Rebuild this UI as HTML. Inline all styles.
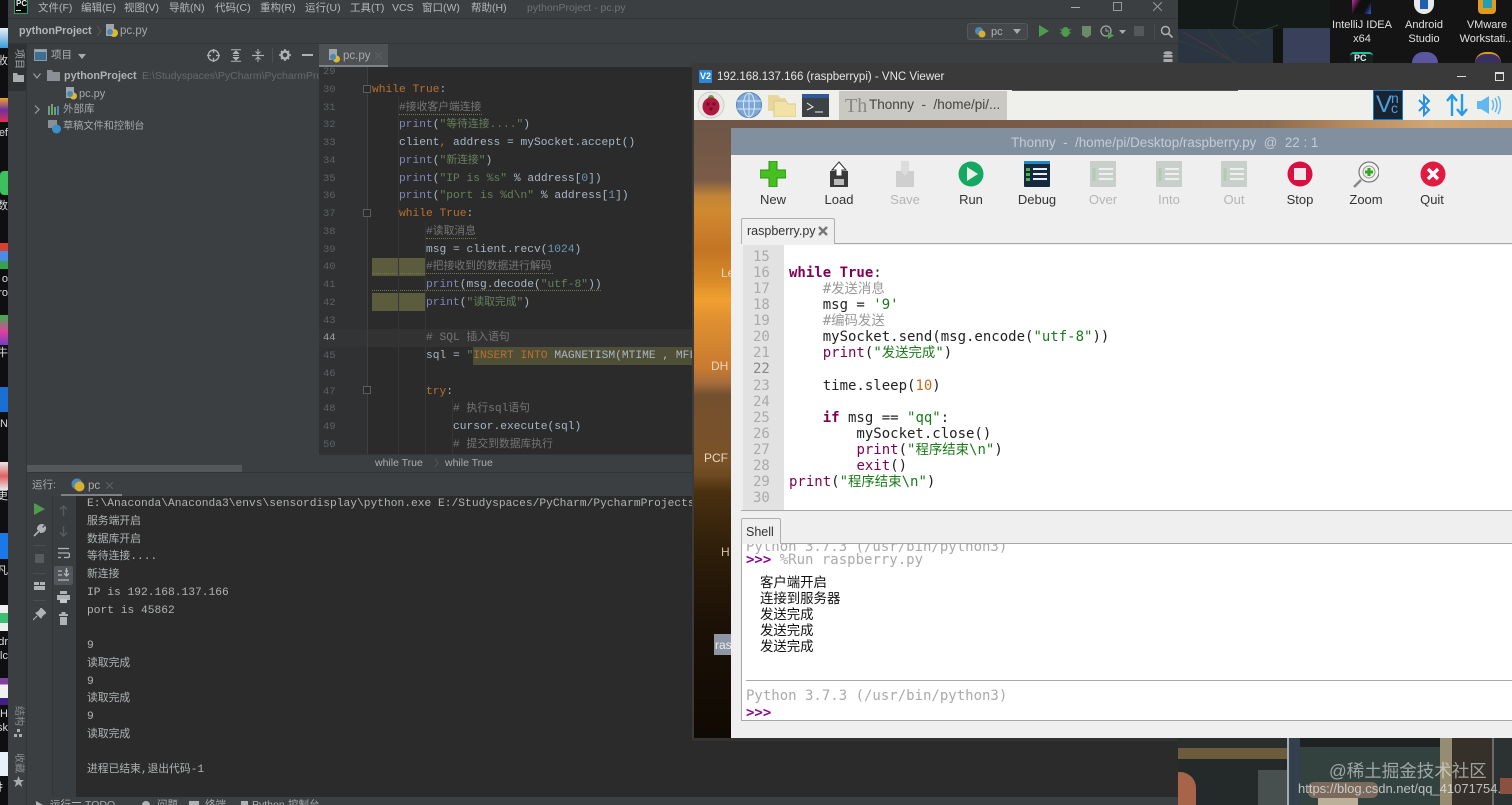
<!DOCTYPE html>
<html lang="zh"><head><meta charset="utf-8"><title>pc.py</title>
<style>
html,body{margin:0;padding:0;width:1512px;height:805px;overflow:hidden;background:#111}
*{box-sizing:border-box}
.a{position:absolute}
.t{position:absolute;white-space:pre;font-family:"Liberation Sans","Noto Sans CJK SC",sans-serif;line-height:16px}
svg{position:absolute;display:block}
.mono,.mono div{font-family:"Liberation Mono","Noto Sans CJK SC",monospace}
.ide{font-size:11.25px}
.ide div{height:17.75px;line-height:17.75px;white-space:pre}
.ide i{font-style:normal;font-size:10.8px}
.p{color:#8385b8}.k{color:#b9702e}.s{color:#66805a}.c{color:#757575}.d{color:#a9b7c6}
.th{font-family:"DejaVu Sans Mono","Noto Sans CJK SC",monospace;font-size:14px}
.th div{height:16.07px;line-height:16.07px;white-space:pre}
.th i{font-style:normal;font-size:13.4px}
.tk{color:#7f0055;font-weight:bold}.tp{color:#7f0055}.ts{color:#1a7a1a}.tc{color:#999}.tn{color:#c26a20}
.lbl{position:absolute;top:192px;width:66px;text-align:center;font:13px/16px "Liberation Sans",sans-serif;color:#333}
.dis{color:#b5b5b5}
.desk{position:absolute;text-align:center;color:#e0e0e0;font:11px/14px "Liberation Sans",sans-serif;white-space:nowrap}
.v{writing-mode:vertical-rl;text-orientation:sideways}
.w{position:absolute;height:1px;border-top:1px dotted #77774e}
</style></head><body>

<!-- left desktop strip -->
<div class="a" style="left:0;top:0;width:8px;height:805px;background:#0f0f12;overflow:hidden">
<div class="a" style="left:0;top:28px;width:8px;height:20px;background:linear-gradient(#e8f0f5,#3a9ad8)"></div>
<div class="a" style="left:0;top:98px;width:8px;height:24px;background:linear-gradient(#f0a030,#7030a0 50%,#e03050)"></div>
<div class="a" style="left:0;top:171px;width:8px;height:24px;background:#3fc060;border-radius:4px 0 0 4px"></div>
<div class="a" style="left:0;top:243px;width:8px;height:26px;background:linear-gradient(#d84030 30%,#4a8ae8 30%,#4a8ae8 70%,#3aa050 70%)"></div>
<div class="a" style="left:0;top:315px;width:8px;height:30px;background:linear-gradient(#3ab050,#e040a0 55%,#7040c0)"></div>
<div class="a" style="left:0;top:387px;width:8px;height:25px;background:#1a70d0"></div>
<div class="a" style="left:0;top:462px;width:8px;height:28px;background:linear-gradient(#e8e8e8,#e06060 50%,#e8e8f0)"></div>
<div class="a" style="left:0;top:533px;width:8px;height:26px;background:#1a78e8"></div>
<div class="a" style="left:0;top:605px;width:8px;height:26px;background:linear-gradient(#f0f0f0 30%,#3ac070 30%,#3ac070 70%,#f0f0f0 70%)"></div>
<div class="a" style="left:0;top:678px;width:8px;height:27px;background:linear-gradient(#8040a0 25%,#f0f0f0 25%,#f0f0f0 75%,#402080 75%)"></div>
<div class="a" style="left:0;top:752px;width:8px;height:24px;background:#e8f0fa"></div>
<div class="t" style="right:0;top:53px;color:#ddd;font-size:11px">收</div>
<div class="t" style="right:0;top:125px;color:#ddd;font-size:11px">ef</div>
<div class="t" style="right:0;top:198px;color:#ddd;font-size:11px">数</div>
<div class="t" style="right:0;top:271px;color:#ddd;font-size:11px">o</div>
<div class="t" style="right:0;top:285px;color:#ddd;font-size:11px">ro</div>
<div class="t" style="right:0;top:345px;color:#ddd;font-size:11px">牛</div>
<div class="t" style="right:0;top:416px;color:#ddd;font-size:11px">IN</div>
<div class="t" style="right:0;top:488px;color:#ddd;font-size:11px">更</div>
<div class="t" style="right:0;top:563px;color:#ddd;font-size:11px">凡</div>
<div class="t" style="right:0;top:634px;color:#ddd;font-size:11px">dr</div>
<div class="t" style="right:0;top:648px;color:#ddd;font-size:11px">lc</div>
<div class="t" style="right:0;top:706px;color:#ddd;font-size:11px">H</div>
<div class="t" style="right:0;top:720px;color:#ddd;font-size:11px">sk</div>
<div class="t" style="right:0;top:780px;color:#ddd;font-size:11px">扌</div>
</div>

<!-- IDE -->
<div class="a" style="left:8px;top:0;width:1170px;height:805px;background:#3c3f41"></div>
<div class="a" style="left:8px;top:18px;width:1170px;height:1px;background:#333537"></div>
<div class="a" style="left:8px;top:43px;width:1170px;height:1px;background:#323436"></div>
<!-- logo -->
<div class="a" style="left:14px;top:0;width:14px;height:14px;background:#0c0c0c;border:1px solid #25a06a;border-top:0"></div>
<div class="t" style="left:16px;top:-2px;font:bold 8px/12px 'Liberation Sans';color:#eee">PC</div>
<div class="a" style="left:16px;top:10px;width:5px;height:1px;background:#ddd"></div>
<!-- menu -->
<div class="t" style="left:38px;top:0;font-size:10.5px;color:#b4b8ba">文件(F)</div>
<div class="t" style="left:81px;top:0;font-size:10.5px;color:#b4b8ba">编辑(E)</div>
<div class="t" style="left:124px;top:0;font-size:10.5px;color:#b4b8ba">视图(V)</div>
<div class="t" style="left:169px;top:0;font-size:10.5px;color:#b4b8ba">导航(N)</div>
<div class="t" style="left:215px;top:0;font-size:10.5px;color:#b4b8ba">代码(C)</div>
<div class="t" style="left:260px;top:0;font-size:10.5px;color:#b4b8ba">重构(R)</div>
<div class="t" style="left:305px;top:0;font-size:10.5px;color:#b4b8ba">运行(U)</div>
<div class="t" style="left:350px;top:0;font-size:10.5px;color:#b4b8ba">工具(T)</div>
<div class="t" style="left:392px;top:0;font-size:10.5px;color:#b4b8ba">VCS</div>
<div class="t" style="left:422px;top:0;font-size:10.5px;color:#b4b8ba">窗口(W)</div>
<div class="t" style="left:471px;top:0;font-size:10.5px;color:#b4b8ba">帮助(H)</div>
<div class="t" style="left:527px;top:0;font-size:10.5px;color:#6e7274">pythonProject - pc.py</div>
<!-- window buttons -->
<div class="a" style="left:1071px;top:7px;width:9px;height:1px;background:#aaa"></div>
<div class="a" style="left:1113px;top:2px;width:9px;height:9px;border:1px solid #999"></div>
<svg style="left:1153px;top:2px" width="9" height="9"><path d="M0 0L9 9M9 0L0 9" stroke="#999" fill="none"/></svg>
<!-- breadcrumb -->
<div class="t" style="left:19px;top:23px;font-size:10.8px;font-weight:bold;color:#b2b6b8">pythonProject</div>
<svg style="left:96px;top:26px" width="6" height="10"><path d="M1 0L5 5L1 10" stroke="#55585a" fill="none"/></svg>
<svg style="left:105px;top:24px" width="13" height="14"><rect x="1" y="0" width="8" height="12" fill="#9aa7b0"/><circle cx="9" cy="9" r="4" fill="#e0b830"/><circle cx="5" cy="8" r="3" fill="#4a88b8"/></svg>
<div class="t" style="left:120px;top:23px;font-size:11.5px;color:#a4a8aa">pc.py</div>
<!-- toolbar right -->
<div class="a" style="left:967px;top:23px;width:61px;height:17px;border:1px solid #55585a;border-radius:3px;background:#45484a"></div>
<svg style="left:974px;top:26px" width="12" height="12"><circle cx="5" cy="5" r="4" fill="#4a88b8"/><circle cx="8" cy="8" r="3.5" fill="#d8b030"/></svg>
<div class="t" style="left:991px;top:24px;font-size:11px;color:#b0b4b6">pc</div>
<svg style="left:1013px;top:29px" width="8" height="5"><path d="M0 0H8L4 5Z" fill="#aaa"/></svg>
<svg style="left:1038px;top:25px" width="11" height="12"><path d="M1 0L11 6L1 12Z" fill="#4f9a4f"/></svg>
<svg style="left:1059px;top:25px" width="13" height="13"><ellipse cx="6.5" cy="7" rx="4" ry="5" fill="#4f9a4f"/><path d="M1 4L4 6M12 4L9 6M1 8H3M12 8H10" stroke="#4f9a4f"/></svg>
<svg style="left:1080px;top:25px" width="13" height="13"><path d="M2 1H11V10L6.5 13L2 10Z" fill="#6a8a6a"/></svg>
<svg style="left:1100px;top:25px" width="14" height="14"><circle cx="6" cy="6" r="5" fill="none" stroke="#a0a4a6" stroke-width="1.3"/><path d="M6 3V6H9" stroke="#a0a4a6" fill="none"/><path d="M8 7L14 10.5L8 14Z" fill="#4f9a4f"/></svg>
<svg style="left:1119px;top:30px" width="7" height="4"><path d="M0 0H7L3.5 4Z" fill="#aaa"/></svg>
<div class="a" style="left:1134px;top:26px;width:10px;height:10px;background:#55585a"></div>
<div class="a" style="left:1154px;top:24px;width:1px;height:15px;background:#4a4d4f"></div>
<svg style="left:1160px;top:25px" width="13" height="13"><circle cx="5.5" cy="5.5" r="4" fill="none" stroke="#b0b4b6" stroke-width="1.4"/><path d="M8.5 8.5L12.5 12.5" stroke="#b0b4b6" stroke-width="1.6"/></svg>
<svg style="left:1163px;top:51px" width="10" height="12"><ellipse cx="5" cy="2" rx="4.5" ry="1.8" fill="#aaa"/><rect x=".5" y="4" width="9" height="2.5" fill="#aaa"/><rect x=".5" y="8" width="9" height="3" fill="#aaa"/></svg>

<!-- left tool strip -->
<div class="a" style="left:26px;top:44px;width:1px;height:761px;background:#323436"></div>
<div class="a" style="left:8px;top:44px;width:18px;height:47px;background:#2f3133"></div>
<div class="t v" style="left:13px;top:49px;font-size:10px;line-height:11px;color:#a9adaf">项目</div>
<svg style="left:13px;top:73px" width="11" height="9"><path d="M0 0H4L5 2H11V9H0Z" fill="#a8acae"/></svg>
<div class="t v" style="left:13px;top:706px;font-size:10px;line-height:11px;color:#8a8e90">结构</div>
<svg style="left:14px;top:729px" width="9" height="9"><rect x="3" y="0" width="3" height="3" fill="#a8acae"/><rect y="5" width="3" height="3" fill="#a8acae"/><rect x="5" y="5" width="3" height="3" fill="#a8acae"/></svg>
<div class="t v" style="left:13px;top:753px;font-size:10px;line-height:11px;color:#8a8e90">收藏</div>
<svg style="left:13px;top:776px" width="11" height="11"><path d="M5.5 0L7 4H11L8 6.5L9.2 11L5.5 8.3L1.8 11L3 6.5L0 4H4Z" fill="#a8acae"/></svg>

<!-- project panel -->
<svg style="left:34px;top:49px" width="13" height="12"><rect x=".5" y=".5" width="12" height="11" fill="#3d6f95" stroke="#8a9aa6"/><rect x="1" y="1" width="11" height="2" fill="#a0a8ae"/></svg>
<div class="t" style="left:51px;top:47px;font-size:10.5px;color:#aeb2b4">项目</div>
<svg style="left:78px;top:54px" width="8" height="5"><path d="M0 0H8L4 5Z" fill="#aaa"/></svg>
<svg style="left:207px;top:49px" width="13" height="13"><circle cx="6.5" cy="6.5" r="5.3" fill="none" stroke="#afb3b5" stroke-width="1.3"/><path d="M6.5 0V4M6.5 9V13M0 6.5H4M9 6.5H13" stroke="#afb3b5" stroke-width="1.3"/></svg>
<svg style="left:230px;top:49px" width="12" height="13"><path d="M1 .7H11M1 12.3H11M3 6.5H9M6 2L3.5 4.5H8.5ZM6 11L3.5 8.5H8.5Z" stroke="#afb3b5" fill="#afb3b5"/></svg>
<svg style="left:252px;top:49px" width="12" height="13"><path d="M0 6.5H12" stroke="#afb3b5" stroke-width="1.2"/><path d="M6 0V4M6 9V13M3.5 2.5L6 5L8.5 2.5M3.5 10.5L6 8L8.5 10.5" stroke="#afb3b5" fill="none"/></svg>
<div class="a" style="left:272px;top:48px;width:1px;height:15px;background:#4d5052"></div>
<svg style="left:279px;top:49px" width="12" height="12"><circle cx="6" cy="6" r="3.5" fill="none" stroke="#afb3b5" stroke-width="2.4"/><path d="M6 0V2M6 10V12M0 6H2M10 6H12M2 2L3 3M10 2L9 3M2 10L3 9M10 10L9 9" stroke="#afb3b5" stroke-width="1.6"/></svg>
<div class="a" style="left:302px;top:54px;width:11px;height:2px;background:#afb3b5"></div>

<svg style="left:33px;top:73px" width="8" height="6"><path d="M.5 .5L4 5L7.5 .5" stroke="#9a9ea0" fill="none" stroke-width="1.2"/></svg>
<svg style="left:47px;top:70px" width="13" height="11"><path d="M0 0H5L6 2H13V11H0Z" fill="#8a9096"/></svg>
<div class="t" style="left:64px;top:68px;font-size:10.8px;font-weight:bold;color:#adb1b3">pythonProject</div>
<div class="a" style="left:142px;top:68px;width:177px;height:16px;overflow:hidden"><div class="t" style="left:0;top:0;font-size:10.5px;color:#66696b">E:\Studyspaces\PyCharm\PycharmProjects\pythonProject</div></div>
<svg style="left:65px;top:87px" width="12" height="13"><rect x="1" y="0" width="8" height="11" fill="#9aa7b0"/><circle cx="8.5" cy="9" r="3.5" fill="#e0b830"/><circle cx="5" cy="7" r="3" fill="#4a88b8"/></svg>
<div class="t" style="left:79px;top:86px;font-size:11px;color:#a4a8aa">pc.py</div>
<svg style="left:34px;top:105px" width="6" height="9"><path d="M1 .5L5 4.5L1 8.5" stroke="#9a9ea0" fill="none" stroke-width="1.2"/></svg>
<svg style="left:48px;top:104px" width="12" height="11"><path d="M1 2V11M4 0V11M7 3V11M10 2V11" stroke="#6fa070" stroke-width="2"/><path d="M10 2V11" stroke="#4a88b8" stroke-width="2"/></svg>
<div class="t" style="left:63px;top:101px;font-size:10.5px;color:#a4a8aa">外部库</div>
<svg style="left:48px;top:120px" width="13" height="14"><rect width="9" height="8" fill="#8a9096"/><circle cx="8.5" cy="9" r="4.5" fill="#3a90c8"/></svg>
<div class="t" style="left:63px;top:119px;font-size:10.2px;color:#a4a8aa">草稿文件和控制台</div>
<!-- project scrollbar -->
<div class="a" style="left:27px;top:465px;width:215px;height:7px;background:#55585a"></div>

<!-- editor -->
<div class="a" style="left:319px;top:44px;width:373px;height:23px;background:#3c3f41"></div>
<div class="a" style="left:319px;top:44px;width:69px;height:23px;background:#4e5254;border-bottom:2px solid #7f8284"></div>
<svg style="left:328px;top:49px" width="12" height="14"><rect x="1" y="0" width="8" height="11" fill="#9aa7b0"/><circle cx="8.5" cy="10" r="3.5" fill="#e0b830"/><circle cx="5" cy="8" r="3" fill="#4a88b8"/></svg>
<div class="t" style="left:343px;top:48px;font-size:11.5px;color:#a9adaf">pc.py</div>
<svg style="left:375px;top:52px" width="7" height="7"><path d="M0 0L7 7M7 0L0 7" stroke="#5f6264" fill="none"/></svg>

<div class="a" style="left:319px;top:67px;width:373px;height:387px;background:#2b2b2b;overflow:hidden">
 <div class="a" style="left:0;top:0;width:48px;height:387px;background:#2f3133"></div>
 <div class="a" style="left:48px;top:262px;width:325px;height:18px;background:#323232"></div>
 <div class="a" style="left:0;top:262px;width:48px;height:18px;background:#323436"></div>
 <div class="a" style="left:53px;top:191px;width:54px;height:18px;background:#5b5b3e"></div>
 <div class="a" style="left:53px;top:226px;width:54px;height:18px;background:#5b5b3e"></div>
 <div class="a" style="left:79px;top:191px;width:1px;height:18px;background:#44442f"></div>
 <div class="a" style="left:79px;top:226px;width:1px;height:18px;background:#44442f"></div>
 <div class="a" style="left:154px;top:280px;width:219px;height:18px;background:#4f4f38"></div>
 <div class="w" style="left:53px;top:223px;width:229px"></div>
 <div class="w" style="left:53px;top:206px;width:181px"></div>
 <div class="w" style="left:107px;top:171px;width:50px"></div>
 <div class="w" style="left:80px;top:47px;width:83px"></div>
 <div class="a" style="left:48px;top:0;width:1px;height:387px;background:#3e4042"></div>
 <div class="a" style="left:79px;top:30px;width:1px;height:357px;background:#363636"></div>
 <div class="a" style="left:106px;top:155px;width:1px;height:232px;background:#363636"></div>
 <div class="a" style="left:133px;top:332px;width:1px;height:55px;background:#363636"></div>
 <div class="a" style="left:44px;top:18px;width:8px;height:8px;border:1px solid #5c5c5c;background:#2b2b2b"></div>
 <div class="a" style="left:44px;top:142px;width:8px;height:8px;border:1px solid #5c5c5c;background:#2b2b2b"></div>
 <div class="a" style="left:44px;top:319px;width:8px;height:8px;border:1px solid #5c5c5c;background:#2b2b2b"></div>
 <div class="a mono ide" style="left:4px;top:-3px;width:30px;color:#5d6163;font-size:10.5px">
  <div>29</div><div>30</div><div>31</div><div>32</div><div>33</div><div>34</div><div>35</div><div>36</div><div>37</div><div>38</div><div>39</div><div>40</div><div>41</div><div>42</div><div>43</div><div style="color:#a4a3a3">44</div><div>45</div><div>46</div><div>47</div><div>48</div><div>49</div><div>50</div>
 </div>
 <div class="a mono ide d" style="left:53px;top:-3px;width:340px">
<div></div>
<div><span class="k">while True</span>:</div>
<div>    <span class="c">#<i>接收客户端连接</i></span></div>
<div>    <span class="p">print</span>(<span class="s">"<i>等待连接</i>...."</span>)</div>
<div>    client<span class="k">,</span> address = mySocket.accept()</div>
<div>    <span class="p">print</span>(<span class="s">"<i>新连接</i>"</span>)</div>
<div>    <span class="p">print</span>(<span class="s">"IP is %s"</span> % address[<span style="color:#6897bb">0</span>])</div>
<div>    <span class="p">print</span>(<span class="s">"port is %d\n"</span> % address[<span style="color:#6897bb">1</span>])</div>
<div>    <span class="k">while True</span>:</div>
<div>        <span class="c">#<i>读取消息</i></span></div>
<div>        msg = client.recv(<span style="color:#6897bb">1024</span>)</div>
<div>        <span class="c">#<i>把接收到的数据进行解码</i></span></div>
<div>        <span class="p">print</span>(msg.decode(<span class="s">"utf-8"</span>))</div>
<div>        <span class="p">print</span>(<span class="s">"<i>读取完成</i>"</span>)</div>
<div></div>
<div>        <span class="c"># SQL <i>插入语句</i></span></div>
<div>        sql = <span class="s">"</span><span class="k">INSERT INTO</span> <span style="color:#a9b7c6">MAGNETISM(MTIME , MFL</span></div>
<div></div>
<div>        <span class="k">try</span>:</div>
<div>            <span class="c"># <i>执行</i>sql<i>语句</i></span></div>
<div>            cursor.execute(sql)</div>
<div>            <span class="c"># <i>提交到数据库执行</i></span></div>
 </div>
</div>
<div class="a" style="left:319px;top:454px;width:373px;height:18px;background:#3c3f41;border-top:1px solid #323436"></div>
<div class="a" style="left:27px;top:472px;width:665px;height:1px;background:#323436"></div>
<div class="t" style="left:375px;top:455px;font-size:10.5px;color:#a9adaf">while True</div>
<div class="t" style="left:445px;top:455px;font-size:10.5px;color:#a9adaf">while True</div>
<svg style="left:434px;top:459px" width="5" height="8"><path d="M1 0L4 4L1 8" stroke="#55585a" fill="none"/></svg>

<!-- run panel -->
<div class="t" style="left:32px;top:477px;font-size:10.5px;color:#a9adaf">运行:</div>
<svg style="left:71px;top:478px" width="14" height="14"><circle cx="6" cy="6" r="5.5" fill="#4a88b8"/><circle cx="8.5" cy="8.5" r="5" fill="#d8b030"/></svg>
<div class="t" style="left:88px;top:478px;font-size:11.5px;color:#a9adaf">pc</div>
<svg style="left:106px;top:482px" width="7" height="7"><path d="M0 0L7 7M7 0L0 7" stroke="#5f6264" fill="none"/></svg>
<div class="a" style="left:61px;top:494px;width:61px;height:2px;background:#7f8284"></div>
<div class="a" style="left:27px;top:496px;width:25px;height:301px;background:#3c3f41"></div>
<div class="a" style="left:52px;top:496px;width:24px;height:301px;background:#3a3d3f;border-left:1px solid #333537"></div>
<svg style="left:34px;top:503px" width="11" height="12"><path d="M0 0L11 6L0 12Z" fill="#4f9a4f"/></svg>
<svg style="left:33px;top:524px" width="13" height="13"><path d="M1 12L6 7M5 6C4 3 7 0 10 1L8 3L10 5L12 3C13 6 10 9 7 8" stroke="#afb3b5" fill="#afb3b5" stroke-width="1.6"/></svg>
<div class="a" style="left:35px;top:554px;width:9px;height:9px;background:#585b5d"></div>
<div class="a" style="left:33px;top:545px;width:13px;height:1px;background:#4a4d4f"></div>
<div class="a" style="left:33px;top:573px;width:13px;height:1px;background:#4a4d4f"></div>
<svg style="left:34px;top:582px" width="11" height="9"><rect width="5" height="3" fill="#afb3b5"/><rect x="6" width="5" height="3" fill="#afb3b5"/><rect y="4" width="11" height="4" fill="#afb3b5"/></svg>
<div class="a" style="left:33px;top:600px;width:13px;height:1px;background:#4a4d4f"></div>
<svg style="left:33px;top:608px" width="13" height="13"><path d="M8 0L13 5L11 6L9 8L8 10L3 5L5 4L7 2ZM4 8L0 12" stroke="#afb3b5" fill="#afb3b5" stroke-width="1.1"/></svg>
<svg style="left:59px;top:505px" width="9" height="11"><path d="M4.5 1V11M1 4.5L4.5 1L8 4.5" stroke="#595c5e" fill="none" stroke-width="1.4"/></svg>
<svg style="left:59px;top:526px" width="9" height="11"><path d="M4.5 0V10M1 6.5L4.5 10L8 6.5" stroke="#595c5e" fill="none" stroke-width="1.4"/></svg>
<svg style="left:57px;top:547px" width="13" height="13"><path d="M1 1.5H12M1 6H11C13 6 13 10.5 11 10.5H7M1 10.5H4" stroke="#afb3b5" fill="none" stroke-width="1.3"/></svg>
<div class="a" style="left:54px;top:566px;width:19px;height:19px;background:#52565a;border-radius:2px"></div>
<svg style="left:57px;top:568px" width="13" height="14"><path d="M1 3H5M1 7H5M1 12H12M8 3H11M9.5 0V8M7 5.5L9.5 8L12 5.5" stroke="#b4b8ba" fill="none" stroke-width="1.3"/></svg>
<svg style="left:57px;top:591px" width="13" height="13"><rect x="3" y="0" width="7" height="3" fill="#afb3b5"/><rect y="4" width="13" height="5" fill="#afb3b5"/><rect x="3" y="8" width="7" height="4" fill="#c4c8ca"/></svg>
<svg style="left:59px;top:612px" width="9" height="13"><rect x="2.5" width="4" height="2" fill="#afb3b5"/><rect y="2" width="9" height="2" fill="#afb3b5"/><rect x="1" y="5" width="7" height="8" fill="#afb3b5"/></svg>

<div class="a" style="left:76px;top:496px;width:616px;height:301px;background:#2b2b2b"></div>
<div class="a" style="left:692px;top:738px;width:486px;height:59px;background:#2b2b2b"></div>
<div class="a mono ide" style="left:87px;top:496px;width:605px;height:301px;overflow:hidden;color:#b0b4b6">
<div>E:\Anaconda\Anaconda3\envs\sensordisplay\python.exe E:/Studyspaces/PyCharm/PycharmProjects/pythonProject/pc.py</div>
<div><i>服务端开启</i></div>
<div><i>数据库开启</i></div>
<div><i>等待连接</i>....</div>
<div><i>新连接</i></div>
<div>IP is 192.168.137.166</div>
<div>port is 45862</div>
<div></div>
<div>9</div>
<div><i>读取完成</i></div>
<div>9</div>
<div><i>读取完成</i></div>
<div>9</div>
<div><i>读取完成</i></div>
<div></div>
<div><i>进程已结束,退出代码</i>-1</div>
</div>
<!-- status strip -->
<div class="a" style="left:27px;top:797px;width:1151px;height:8px;background:#3c3f41;overflow:hidden">
<svg style="left:9px;top:4px" width="7" height="6"><path d="M0 0L7 4V6H0Z" fill="#afb3b5"/></svg>
<div class="t" style="left:23px;top:0;font-size:10.5px;color:#a9adaf">运行</div>
<div class="a" style="left:45px;top:5px;width:9px;height:1px;background:#afb3b5"></div>
<div class="t" style="left:58px;top:0;font-size:10.5px;color:#a9adaf">TODO</div>
<div class="a" style="left:115px;top:4px;width:8px;height:8px;border-radius:4px;background:#afb3b5"></div>
<div class="t" style="left:130px;top:0;font-size:10.5px;color:#a9adaf">问题</div>
<div class="a" style="left:162px;top:4px;width:10px;height:8px;background:#afb3b5"></div>
<div class="t" style="left:178px;top:0;font-size:10.5px;color:#a9adaf">终端</div>
<div class="a" style="left:214px;top:4px;width:7px;height:7px;background:#afb3b5"></div>
<div class="t" style="left:225px;top:0;font-size:10.5px;color:#a9adaf">Python</div>
<div class="t" style="left:261px;top:0;font-size:10.5px;color:#a9adaf">控制台</div>
</div>

<!-- top right desktop -->
<div class="a" style="left:1178px;top:0;width:334px;height:63px;background:#141414"></div>
<div class="a" style="left:1178px;top:0;width:152px;height:29px;background:#141a17"></div>
<div class="a" style="left:1178px;top:29px;width:95px;height:34px;background:#2b3542"></div>
<div class="a" style="left:1283px;top:28px;width:47px;height:35px;background:#38405a"></div>
<div class="a" style="left:1273px;top:29px;width:10px;height:34px;background:#101512"></div>
<svg style="left:1178px;top:0" width="150" height="63"><path d="M0 40L60 63M30 30L55 63M60 0L55 25L80 45M60 40L100 25" stroke="#2f4038" fill="none"/><path d="M5 32L50 58" stroke="#5a3440" fill="none"/></svg>
<div class="a" style="left:1352px;top:0;width:19px;height:14px;background:linear-gradient(120deg,#c030a0,#101010 35%,#101010 70%,#3060e0)"></div>
<div class="a" style="left:1414px;top:0;width:20px;height:14px;background:#e8e8e8;border-radius:0 0 10px 10px"></div>
<div class="a" style="left:1420px;top:0;width:8px;height:9px;background:#2060b0"></div>
<div class="a" style="left:1478px;top:0;width:18px;height:14px;background:#e09a20;border-radius:0 0 4px 4px"></div>
<div class="a" style="left:1483px;top:0;width:9px;height:8px;background:#20a0b0"></div>
<div class="desk" style="left:1322px;top:18px;width:80px">IntelliJ IDEA<br>x64</div>
<div class="desk" style="left:1384px;top:18px;width:80px">Android<br>Studio</div>
<div class="desk" style="left:1447px;top:18px;width:80px">VMware<br>Workstati...</div>
<div class="a" style="left:1350px;top:52px;width:23px;height:11px;background:#16201c;border-top:2px solid #20c0a0;border-radius:4px 4px 0 0"></div>
<div class="t" style="left:1354px;top:52px;font:bold 9px/12px 'Liberation Sans';color:#eee">PC</div>
<div class="a" style="left:1412px;top:52px;width:26px;height:11px;border-radius:13px 13px 0 0;background:#5a56a0"></div>
<div class="a" style="left:1475px;top:52px;width:26px;height:11px;border-radius:13px 13px 0 0;background:#3a3060;border-top:2px solid #e09a20"></div>

<!-- bottom right desktop -->
<div class="a" style="left:1178px;top:738px;width:334px;height:67px;background:#2a2c2b;overflow:hidden">
 <div class="a" style="left:0;top:0;width:109px;height:10px;background:#2a2e2d"></div>
 <div class="a" style="left:0;top:10px;width:109px;height:11px;background:#6a5c3c"></div>
 <div class="a" style="left:0;top:21px;width:109px;height:46px;background:#232a29"></div>
 <div class="a" style="left:-14px;top:34px;width:32px;height:50px;border-radius:16px;background:#a86448"></div>
 <div class="a" style="left:80px;top:32px;width:29px;height:35px;background:#47504f"></div>
 <div class="a" style="left:109px;top:0;width:13px;height:67px;background:#34404e;border-left:2px solid #a8acb0"></div>
 <div class="a" style="left:122px;top:0;width:140px;height:67px;background:#33423f"></div>
 <div class="a" style="left:122px;top:0;width:140px;height:9px;background:#1e2220"></div>
 <div class="a" style="left:130px;top:44px;width:70px;height:16px;background:#7a6a5c;border-radius:6px"></div>
 <div class="a" style="left:140px;top:60px;width:40px;height:7px;background:#bdb09a"></div>
 <div class="a" style="left:262px;top:0;width:12px;height:67px;background:#968c72"></div>
 <div class="a" style="left:274px;top:0;width:40px;height:67px;background:#35312a"></div>
 <div class="a" style="left:314px;top:0;width:20px;height:67px;background:#2c3232;border-left:2px solid #6a6a6a"></div>
 <div class="a" style="left:322px;top:40px;width:12px;height:16px;background:#8a5040"></div>
</div>
<div class="t" style="left:1329px;top:761px;font-size:17.5px;line-height:20px;color:rgba(225,228,228,.62)">@稀土掘金技术社区</div>
<div class="t" style="left:1298px;top:781px;font-size:13px;color:rgba(225,228,228,.78)">https://blog.csdn.net/qq_41071754.</div>

<!-- VNC window -->
<div class="a" style="left:692px;top:63px;width:820px;height:27px;background:#3a3a3a"></div>
<div class="a" style="left:692px;top:63px;width:2px;height:675px;background:#3a3a3a"></div>
<div class="a" style="left:692px;top:738px;width:486px;height:3px;background:#333"></div>
<div class="a" style="left:699px;top:70px;width:13px;height:13px;background:#2b88d8;border-radius:1px"></div>
<div class="t" style="left:700px;top:69px;font:bold 9px/14px 'Liberation Sans';color:#fff">V2</div>
<div class="t" style="left:717px;top:69px;font-size:11.5px;color:#e6e6e6">192.168.137.166 (raspberrypi) - VNC Viewer</div>
<div class="a" style="left:1457px;top:76px;width:9px;height:1px;background:#ddd"></div>
<div class="a" style="left:1495px;top:72px;width:9px;height:9px;border:1px solid #ddd;border-top-width:2px"></div>

<!-- Pi panel -->
<div class="a" style="left:694px;top:90px;width:818px;height:30px;background:#efefec"></div>
<div class="a" style="left:1012px;top:90px;width:226px;height:1px;background:#555"></div>
<svg style="left:697px;top:91px" width="28" height="28"><circle cx="14" cy="14" r="13" fill="#e8e8e4" stroke="#ccc"/><circle cx="14" cy="7" r="3" fill="#5aa040"/><ellipse cx="14" cy="15.5" rx="8.5" ry="9" fill="#b01840"/><circle cx="11" cy="13" r="1.6" fill="#701028"/><circle cx="17" cy="13" r="1.6" fill="#701028"/><circle cx="14" cy="18" r="1.6" fill="#701028"/></svg>
<svg style="left:736px;top:92px" width="26" height="26"><circle cx="13" cy="13" r="12.5" fill="#7aa8d8" stroke="#5a80b0"/><ellipse cx="13" cy="13" rx="5.5" ry="12" fill="none" stroke="#dce8f4"/><path d="M1 9H25M1 17H25M13 1V25" stroke="#dce8f4"/></svg>
<svg style="left:768px;top:93px" width="28" height="24"><path d="M0 2H10L12 5H18V18H0Z" fill="#e8d69a"/><path d="M6 8H18L20 11H28V24H6Z" fill="#f2e2a6" stroke="#d8c88c"/></svg>
<div class="a" style="left:802px;top:94px;width:27px;height:23px;background:#3e4145;border-top:4px solid #2f5a9a"></div>
<svg style="left:806px;top:102px" width="18" height="12"><path d="M1 1L7 5L1 8M9 10H17" stroke="#eee" fill="none"/></svg>
<div class="a" style="left:839px;top:91px;width:168px;height:29px;background:#c9c8c2"></div>
<div class="t" style="left:845px;top:96px;font:20px/20px 'Liberation Serif';color:#888">Th</div>
<div class="t" style="left:869px;top:97px;font-size:13.5px;color:#444">Thonny  -  /home/pi/...</div>
<div class="a" style="left:1373px;top:90px;width:30px;height:30px;background:#1a2430;border:1px solid #1a78c8"></div>
<div class="t" style="left:1376px;top:94px;font:24px/22px 'Liberation Sans';color:#4aa0e0">V</div>
<div class="t" style="left:1391px;top:91px;font:14px/14px 'Liberation Sans';color:#4aa0e0">n</div>
<div class="t" style="left:1391px;top:101px;font:14px/14px 'Liberation Sans';color:#4aa0e0">c</div>
<svg style="left:1417px;top:94px" width="14" height="23"><path d="M2 6L12 16L7 21V2L12 7L2 17" stroke="#2a90e0" stroke-width="2" fill="none"/></svg>
<svg style="left:1446px;top:94px" width="22" height="22"><path d="M6 22V2M1 7L6 1L11 7M16 0V20M11 15L16 21L21 15" stroke="#2a9ae8" stroke-width="2.4" fill="none"/></svg>
<svg style="left:1477px;top:95px" width="24" height="20"><path d="M0 6H4L12 1V19L4 14H0Z" fill="#60b8f0"/><path d="M15 5Q18 10 15 15M18 3Q22 10 18 17M21 1Q26 10 21 19" stroke="#60b8f0" stroke-width="1.5" fill="none"/></svg>

<!-- wallpaper -->
<div class="a" style="left:694px;top:120px;width:818px;height:8px;background:linear-gradient(90deg,#6e5546 0,#7a5c48 50%,#8a6a50 70%,#b48a60 80%,#cfa676 90%,#c89e70 100%)"></div>
<div class="a" style="left:694px;top:120px;width:37px;height:618px;background:linear-gradient(#6e5546 0,#7a5c48 60px,#c08438 76px,#d08a30 90px,#c47424 130px,#d88a28 160px,#f0a030 180px,#e09030 200px,#c87a30 248px,#a86e3c 262px,#74502e 275px,#7a5228 340px,#6e4a20 355px,#4a3010 372px,#2e1e0a 430px,#1a1006 510px,#100a04 618px)"></div>
<div class="t" style="left:721px;top:265px;font-size:12px;color:#e8d8c0">Le</div>
<div class="t" style="left:711px;top:358px;font-size:12px;color:#e8d8c0">DH</div>
<div class="t" style="left:704px;top:450px;font-size:12px;color:#e8d8c0">PCF</div>
<div class="t" style="left:721px;top:544px;font-size:12px;color:#cfc4b0">H</div>
<div class="a" style="left:714px;top:634px;width:17px;height:21px;background:#8d96a4"></div>
<div class="t" style="left:715px;top:637px;font-size:12px;color:#eee">ras</div>

<!-- Thonny window -->
<div class="a" style="left:731px;top:128px;width:781px;height:610px;background:#efefef"></div>
<div class="a" style="left:731px;top:128px;width:781px;height:27px;background:#828f9f"></div>
<div class="t" style="left:1011px;top:135px;font-size:13.4px;color:#c4ccd4">Thonny  -  /home/pi/Desktop/raspberry.py  @  22 : 1</div>

<!-- toolbar icons -->
<svg style="left:760px;top:161px" width="26" height="26"><path d="M9 0H17V9H26V17H17V26H9V17H0V9H9Z" fill="#45c020" stroke="#2e9015"/></svg>
<svg style="left:829px;top:161px" width="20" height="26"><path d="M1 10H19V26H1Z" fill="#3a3a3a"/><rect x="5" y="18" width="10" height="6" fill="#bbb"/><path d="M10 1L17 9H13V15H7V9H3Z" fill="#fff" stroke="#333"/></svg>
<svg style="left:895px;top:161px" width="20" height="26"><path d="M1 10H19V26H1Z" fill="#cfcfcf"/><path d="M6 0H14V10L10 15L6 10Z" fill="#dcdcdc"/></svg>
<svg style="left:958px;top:161px" width="26" height="26"><circle cx="13" cy="13" r="12.5" fill="#14a862"/><path d="M9 6L20 13L9 20Z" fill="#e8f0e8"/></svg>
<svg style="left:1024px;top:161px" width="26" height="26"><rect width="26" height="26" fill="#16283c" rx="1"/><rect width="26" height="3" fill="#1c8ac8"/><path d="M9 8H23M9 13H23M9 18H23" stroke="#e8eef4" stroke-width="2"/><path d="M4 7V22" stroke="#4ab04a" stroke-width="4" stroke-dasharray="3 2"/></svg>
<svg style="left:1090px;top:161px" width="26" height="26"><rect width="26" height="26" fill="#c9cfcb"/><path d="M9 8H23M9 13H23M9 18H23" stroke="#eef0ee" stroke-width="2"/><path d="M4 7V20" stroke="#b0ccb0" stroke-width="3"/></svg>
<svg style="left:1156px;top:161px" width="26" height="26"><rect width="26" height="26" fill="#c9cfcb"/><path d="M9 8H23M9 13H23M9 18H23" stroke="#eef0ee" stroke-width="2"/><path d="M4 7V20" stroke="#b0ccb0" stroke-width="3"/></svg>
<svg style="left:1221px;top:161px" width="26" height="26"><rect width="26" height="26" fill="#c9cfcb"/><path d="M9 8H23M9 13H23M9 18H23" stroke="#eef0ee" stroke-width="2"/><path d="M4 7V20" stroke="#b0ccb0" stroke-width="3"/></svg>
<svg style="left:1287px;top:161px" width="26" height="26"><circle cx="13" cy="13" r="12.5" fill="#d80f40"/><rect x="7" y="7" width="12" height="12" fill="#f0e8e8"/></svg>
<svg style="left:1353px;top:161px" width="26" height="28"><circle cx="16" cy="11" r="10" fill="#f4f4f4" stroke="#777" stroke-width="1.2"/><circle cx="16" cy="11" r="6" fill="#e8f0e0" stroke="#999"/><path d="M16 7V15M12 11H20" stroke="#30a820" stroke-width="3"/><path d="M8 19L1 26" stroke="#888" stroke-width="2.5"/></svg>
<svg style="left:1420px;top:161px" width="26" height="26"><circle cx="13" cy="13" r="12.5" fill="#e01a40"/><path d="M8 8L18 18M18 8L8 18" stroke="#fff" stroke-width="3.4"/></svg>
<div class="lbl" style="left:740px">New</div>
<div class="lbl" style="left:806px">Load</div>
<div class="lbl dis" style="left:872px">Save</div>
<div class="lbl" style="left:938px">Run</div>
<div class="lbl" style="left:1004px">Debug</div>
<div class="lbl dis" style="left:1070px">Over</div>
<div class="lbl dis" style="left:1136px">Into</div>
<div class="lbl dis" style="left:1201px">Out</div>
<div class="lbl" style="left:1267px">Stop</div>
<div class="lbl" style="left:1333px">Zoom</div>
<div class="lbl" style="left:1399px">Quit</div>

<!-- editor notebook -->
<div class="a" style="left:741px;top:243px;width:771px;height:1px;background:#a8a8a8"></div>
<div class="a" style="left:741px;top:218px;width:94px;height:26px;background:#efefef;border:1px solid #b0b0b0;border-bottom:0;border-radius:2px 2px 0 0"></div>
<div class="t" style="left:747px;top:223px;font-size:12.5px;color:#333">raspberry.py</div>
<svg style="left:818px;top:226px" width="10" height="10"><path d="M1 1L9 9M9 1L1 9" stroke="#777" stroke-width="2.4"/></svg>
<div class="a" style="left:743px;top:245px;width:769px;height:265px;background:#fff;overflow:hidden">
 <div class="a" style="left:0;top:0;width:41px;height:265px;background:#e2e2e2"></div>
 <div class="a th" style="left:10px;top:4px;color:#aaa">
  <div>15</div><div>16</div><div>17</div><div>18</div><div>19</div><div>20</div><div>21</div><div style="color:#888">22</div><div>23</div><div>24</div><div>25</div><div>26</div><div>27</div><div>28</div><div>29</div><div>30</div>
 </div>
 <div class="a th" style="left:46px;top:4px;color:#222">
<div></div>
<div><span class="tk">while True</span>:</div>
<div>    <span class="tc">#<i>发送消息</i></span></div>
<div>    msg = <span class="ts">'9'</span></div>
<div>    <span class="tc">#<i>编码发送</i></span></div>
<div>    mySocket.send(msg.encode(<span class="ts">"utf-8"</span>))</div>
<div>    <span class="tp">print</span>(<span class="ts">"<i>发送完成</i>"</span>)</div>
<div></div>
<div>    time.sleep(<span class="tn">10</span>)</div>
<div></div>
<div>    <span class="tk">if</span> msg == <span class="ts">"qq"</span>:</div>
<div>        mySocket.close()</div>
<div>        <span class="tp">print</span>(<span class="ts">"<i>程序结束</i>\n"</span>)</div>
<div>        <span class="tp">exit</span>()</div>
<div><span class="tp">print</span>(<span class="ts">"<i>程序结束</i>\n"</span>)</div>
<div></div>
 </div>
</div>
<div class="a" style="left:741px;top:510px;width:771px;height:1px;background:#a8a8a8"></div>

<!-- shell notebook -->
<div class="a" style="left:741px;top:543px;width:771px;height:178px;background:#fff;border-left:1px solid #a8a8a8;border-top:1px solid #a8a8a8;border-bottom:1px solid #a8a8a8;overflow:hidden">
 <div class="t th" style="left:4px;top:-5px;color:#aaa;line-height:16px">Python 3.7.3 (/usr/bin/python3)</div>
 <div class="t th" style="left:4px;top:8px;line-height:16px"><span style="color:#8a0a8a;font-weight:bold">&gt;&gt;&gt;</span> <span style="color:#aaa">%Run raspberry.py</span></div>
 <div class="t" style="left:18px;top:31px;font-size:13.4px;color:#111">客户端开启</div>
 <div class="t" style="left:18px;top:47px;font-size:13.4px;color:#111">连接到服务器</div>
 <div class="t" style="left:18px;top:63px;font-size:13.4px;color:#111">发送完成</div>
 <div class="t" style="left:18px;top:79px;font-size:13.4px;color:#111">发送完成</div>
 <div class="t" style="left:18px;top:95px;font-size:13.4px;color:#111">发送完成</div>
 <div class="a" style="left:4px;top:136px;width:770px;height:1px;background:#aaa"></div>
 <div class="t th" style="left:4px;top:144px;color:#aaa;line-height:16px">Python 3.7.3 (/usr/bin/python3)</div>
 <div class="t th" style="left:4px;top:161px;color:#8a0a8a;font-weight:bold;line-height:16px">&gt;&gt;&gt;</div>
</div>
<div class="a" style="left:741px;top:518px;width:40px;height:26px;background:#efefef;border:1px solid #b0b0b0;border-bottom:0;border-radius:2px 2px 0 0"></div>
<div class="t" style="left:746px;top:524px;font-size:12.5px;color:#333">Shell</div>
</body></html>
